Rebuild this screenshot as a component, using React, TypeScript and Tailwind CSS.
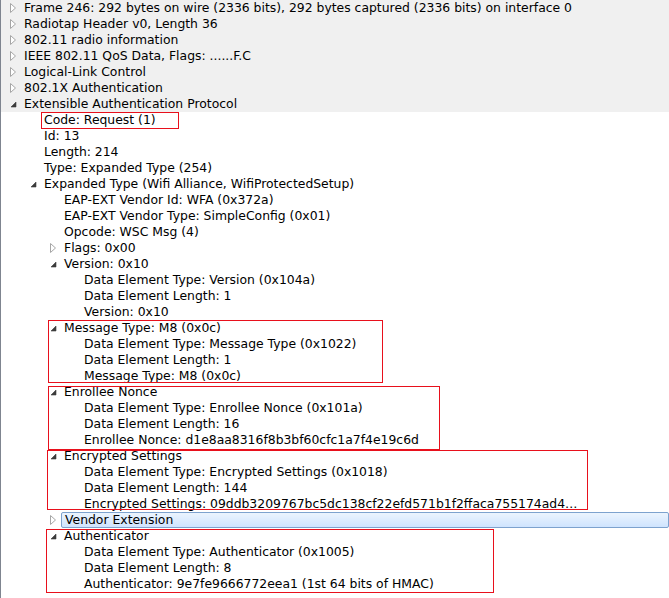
import React from "react";

type Row = { level: number; text: string; state?: "open" | "closed"; selected?: boolean; shaded?: boolean };

const rows: Row[] = [
  { level: 0, text: "Frame 246: 292 bytes on wire (2336 bits), 292 bytes captured (2336 bits) on interface 0", state: "closed", shaded: true },
  { level: 0, text: "Radiotap Header v0, Length 36", state: "closed", shaded: true },
  { level: 0, text: "802.11 radio information", state: "closed", shaded: true },
  { level: 0, text: "IEEE 802.11 QoS Data, Flags: ......F.C", state: "closed", shaded: true },
  { level: 0, text: "Logical-Link Control", state: "closed", shaded: true },
  { level: 0, text: "802.1X Authentication", state: "closed", shaded: true },
  { level: 0, text: "Extensible Authentication Protocol", state: "open", shaded: true },
  { level: 1, text: "Code: Request (1)" },
  { level: 1, text: "Id: 13" },
  { level: 1, text: "Length: 214" },
  { level: 1, text: "Type: Expanded Type (254)" },
  { level: 1, text: "Expanded Type (Wifi Alliance, WifiProtectedSetup)", state: "open" },
  { level: 2, text: "EAP-EXT Vendor Id: WFA (0x372a)" },
  { level: 2, text: "EAP-EXT Vendor Type: SimpleConfig (0x01)" },
  { level: 2, text: "Opcode: WSC Msg (4)" },
  { level: 2, text: "Flags: 0x00", state: "closed" },
  { level: 2, text: "Version: 0x10", state: "open" },
  { level: 3, text: "Data Element Type: Version (0x104a)" },
  { level: 3, text: "Data Element Length: 1" },
  { level: 3, text: "Version: 0x10" },
  { level: 2, text: "Message Type: M8 (0x0c)", state: "open" },
  { level: 3, text: "Data Element Type: Message Type (0x1022)" },
  { level: 3, text: "Data Element Length: 1" },
  { level: 3, text: "Message Type: M8 (0x0c)" },
  { level: 2, text: "Enrollee Nonce", state: "open" },
  { level: 3, text: "Data Element Type: Enrollee Nonce (0x101a)" },
  { level: 3, text: "Data Element Length: 16" },
  { level: 3, text: "Enrollee Nonce: d1e8aa8316f8b3bf60cfc1a7f4e19c6d" },
  { level: 2, text: "Encrypted Settings", state: "open" },
  { level: 3, text: "Data Element Type: Encrypted Settings (0x1018)" },
  { level: 3, text: "Data Element Length: 144" },
  { level: 3, text: "Encrypted Settings: 09ddb3209767bc5dc138cf22efd571b1f2ffaca755174ad4\u2026" },
  { level: 2, text: "Vendor Extension", state: "closed", selected: true },
  { level: 2, text: "Authenticator", state: "open" },
  { level: 3, text: "Data Element Type: Authenticator (0x1005)" },
  { level: 3, text: "Data Element Length: 8" },
  { level: 3, text: "Authenticator: 9e7fe9666772eea1 (1st 64 bits of HMAC)" },
];

const indentClass = ["pl-[4px]", "pl-[24px]", "pl-[44px]", "pl-[64px]"];

function Arrow({ state }: { state?: "open" | "closed" }) {
  if (state === "closed") {
    return (
      <svg width="16" height="16" viewBox="0 0 16 16" className="shrink-0">
        <path d="M5.5 3.5 L10.5 8 L5.5 12.5 Z" fill="#ffffff" stroke="#a6a6a6" strokeWidth="1" />
      </svg>
    );
  }
  if (state === "open") {
    return (
      <svg width="16" height="16" viewBox="0 0 16 16" className="shrink-0">
        <path d="M11 6 L11 11 L6 11 Z" fill="#3c3c3c" stroke="#3c3c3c" strokeWidth="0.6" />
      </svg>
    );
  }
  return <span className="w-4 shrink-0" />;
}

const boxes = [
  "left-[40px] top-[112px] w-[138px] h-[17px]",
  "left-[47px] top-[320px] w-[335px] h-[63px]",
  "left-[47px] top-[386px] w-[392px] h-[64px]",
  "left-[46px] top-[450px] w-[541px] h-[60px]",
  "left-[45px] top-[529px] w-[448px] h-[64px]",
];

export default function App() {
  return (
    <div className="relative w-[669px] h-[598px] bg-white overflow-hidden border-l border-[#7f8590] text-black" style={{ fontFamily: '"DejaVu Sans", sans-serif' }}>
      <div className="flex flex-col">
        {rows.map((r, i) => (
          <div key={i} className={`flex items-center h-[16px] ${indentClass[r.level]} ${r.shaded ? "bg-[#f0f0f0]" : ""}`}>
            <Arrow state={r.state} />
            <div
              className={`flex-1 h-[16px] flex items-center pl-[3px] text-[12.4px] leading-[16px] whitespace-nowrap ${
                r.selected ? "border border-[#7da2ce] rounded-[2px] bg-gradient-to-b from-[#ebf4fe] to-[#cfe4fe]" : ""
              }`}
            >
              {r.text}
            </div>
          </div>
        ))}
      </div>
      {boxes.map((b, i) => (
        <div key={i} className={`absolute ${b} border border-[#e8101c] pointer-events-none`} />
      ))}
    </div>
  );
}
